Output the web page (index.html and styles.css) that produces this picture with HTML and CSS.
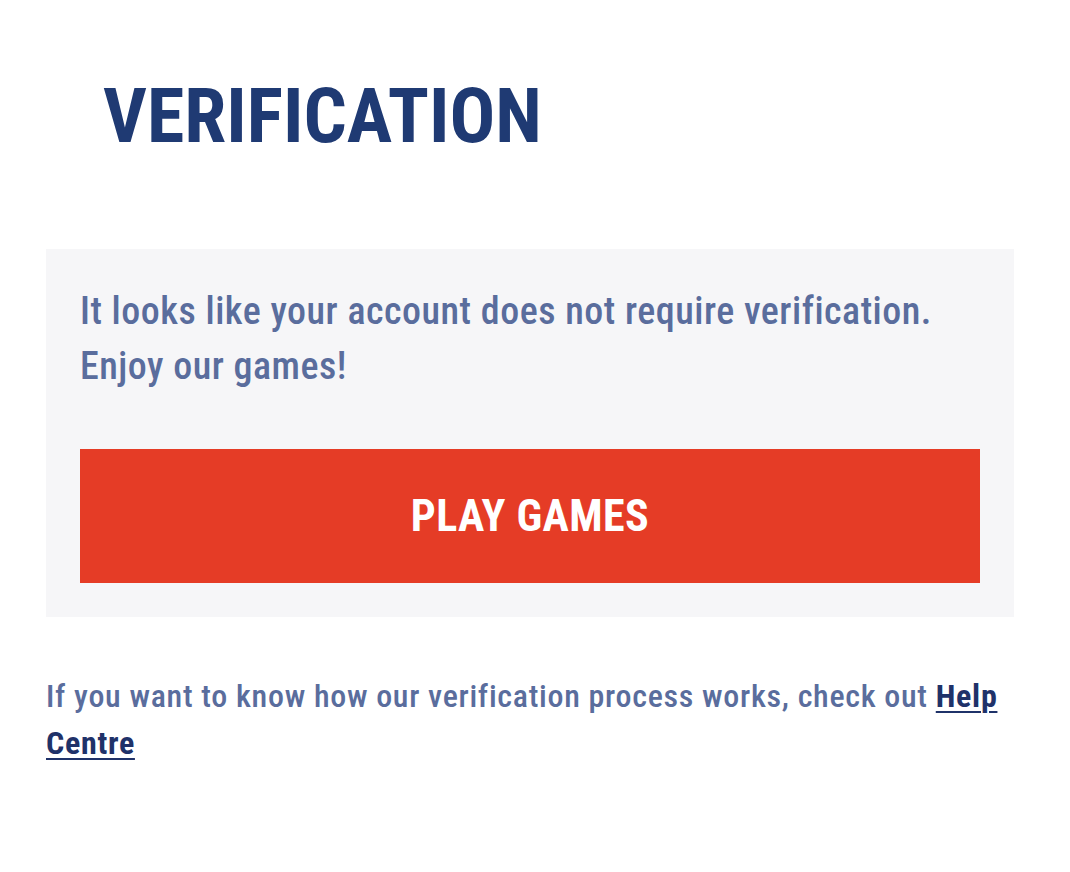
FILE: index.html
```html
<!DOCTYPE html>
<html lang="en">
<head>
<meta charset="utf-8">
<title>Verification</title>
<link rel="stylesheet" href="styles.css">
</head>
<body>
<main class="page">
  <h1 class="title">VERIFICATION</h1>
  <section class="card">
    <p class="card-text">It looks like your account does not require verification. Enjoy our games!</p>
    <a class="play-btn" href="#">PLAY GAMES</a>
  </section>
  <p class="help">If you want to know how our verification process works, check out <a class="help-link" href="#">Help Centre</a></p>
</main>
</body>
</html>
```

FILE: styles.css
```css
html, body {
  margin: 0;
  padding: 0;
  background: #ffffff;
}
body {
  font-family: "Roboto Condensed", Roboto, "Liberation Sans", sans-serif;
}
.page {
  padding: 78px 56px 0 46px;
}
.title {
  margin: 0 0 0 57px;
  font-size: 76px;
  line-height: 76px;
  font-weight: 700;
  color: #1f3a73;
}
.card {
  margin-top: 95px;
  background: #f6f6f8;
  padding: 35px 34px 34px 34px;
}
.card-text {
  margin: 0;
  font-size: 38px;
  line-height: 55px;
  font-weight: 500;
  letter-spacing: 0.5px;
  color: #5a6d9d;
}
.play-btn {
  display: flex;
  align-items: center;
  justify-content: center;
  margin-top: 55px;
  height: 134px;
  background: #e53c26;
  color: #ffffff;
  font-size: 44px;
  font-weight: 700;
  letter-spacing: 0.4px;
  text-decoration: none;
}
.help {
  margin: 56px 0 0 0;
  font-size: 32px;
  line-height: 47px;
  font-weight: 500;
  letter-spacing: 0.7px;
  color: #5a6d9d;
}
.help-link {
  color: #1f3269;
  font-weight: 700;
  text-decoration: underline;
  text-decoration-thickness: 2px;
  text-underline-offset: 4px;
}
```
